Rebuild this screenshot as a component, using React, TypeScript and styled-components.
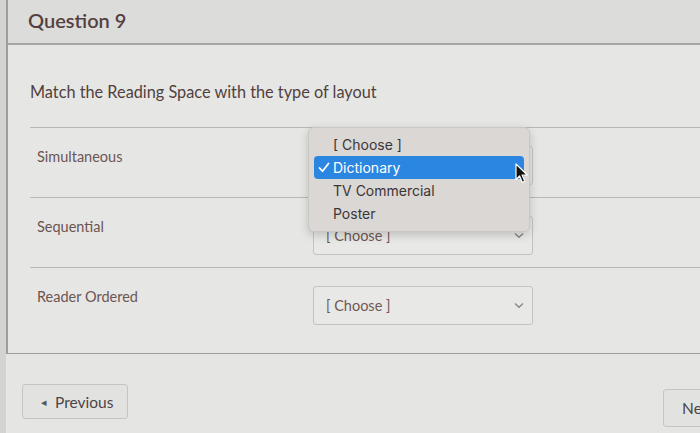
import styled, { createGlobalStyle } from 'styled-components';

const GlobalStyle = createGlobalStyle`
  html, body {
    margin: 0;
    padding: 0;
    background: #e5e6e4;
    font-family: Lato, 'Open Sans', sans-serif;
  }
`;

const options = ['[ Choose ]', 'Dictionary', 'TV Commercial', 'Poster'];

const rows = [
  { label: 'Simultaneous', open: true },
  { label: 'Sequential', open: false },
  { label: 'Reader Ordered', open: false },
];

const Chevron = () => (
  <svg width='10' height='7' viewBox='0 0 10 7'>
    <path d='M1 1.5 L5 5.2 L9 1.5' fill='none' stroke='#8a8585' strokeWidth='1.4' />
  </svg>
);

const CheckMark = () => (
  <svg width='12' height='11' viewBox='0 0 12 11'>
    <path d='M1.5 6 L4.5 9.2 L10.5 1.5' fill='none' stroke='#fff' strokeWidth='1.8' strokeLinecap='round' strokeLinejoin='round' />
  </svg>
);

const Cursor = () => (
  <svg width='14' height='21' viewBox='0 0 14 21'>
    <path
      d='M1 1 L1 16.5 L4.6 13 L7.3 19.4 L9.8 18.3 L7.1 12 L12.3 12 Z'
      fill='#111'
      stroke='#fff'
      strokeWidth='1.2'
      strokeLinejoin='round'
    />
  </svg>
);

const App = () => {
  return (
    <>
      <GlobalStyle />
      <Frame>
        <LeftEdge />
        <Main>
          <QuestionBox>
            <Header>
              <h2>Question 9</h2>
            </Header>
            <Body>
              <Prompt>Match the Reading Space with the type of layout</Prompt>
              <RowList>
                {rows.map((row) => (
                  <Row key={row.label}>
                    <Label>{row.label}</Label>
                    <SelectBox>
                      <span>[ Choose ]</span>
                      <Chevron />
                      {row.open && (
                        <Popup>
                          {options.map((option) => (
                            <Option key={option} selected={option === 'Dictionary'}>
                              <CheckSlot>{option === 'Dictionary' && <CheckMark />}</CheckSlot>
                              <span>{option}</span>
                            </Option>
                          ))}
                          <CursorSpot>
                            <Cursor />
                          </CursorSpot>
                        </Popup>
                      )}
                    </SelectBox>
                  </Row>
                ))}
              </RowList>
            </Body>
          </QuestionBox>
          <Footer>
            <NavButton>
              <Arrow>◂</Arrow>Previous
            </NavButton>
            <NavButton next>
              Next<Arrow>▸</Arrow>
            </NavButton>
          </Footer>
        </Main>
      </Frame>
    </>
  );
};

const Frame = styled.div`
  display: flex;
  height: 433px;
  overflow: hidden;
`;

const LeftEdge = styled.div`
  width: 6px;
  flex-shrink: 0;
  background: #d3d4d2;
`;

const Main = styled.div`
  flex: 1;
  display: flex;
  flex-direction: column;
  min-width: 0;
`;

const QuestionBox = styled.section`
  border-left: 2px solid #9d9e9c;
  border-bottom: 1px solid #9d9e9c;
  height: 354px;
  box-sizing: border-box;
  background: #e6e7e4;
`;

const Header = styled.div`
  height: 45px;
  box-sizing: border-box;
  padding: 8px 0 0 20px;
  background: #dcdddb;
  border-bottom: 2px solid #a6a7a5;

  h2 {
    margin: 0;
    font-size: 20px;
    font-weight: 600;
    line-height: 24px;
    color: #54403f;
  }
`;

const Body = styled.div`
  padding: 37px 0 0 22px;
`;

const Prompt = styled.p`
  margin: 0;
  font-size: 16.3px;
  line-height: 20px;
  color: #523f40;
`;

const RowList = styled.ul`
  list-style: none;
  margin: 25px 0 0 0;
  padding: 0;
`;

const Row = styled.li`
  display: flex;
  align-items: flex-start;
  padding: 18px 0 12px 0;
  border-top: 1px solid #b8b9b7;
`;

const Label = styled.div`
  width: 276px;
  padding: 1px 0 0 7px;
  font-size: 14.5px;
  line-height: 20px;
  color: #6c5553;
`;

const SelectBox = styled.div`
  position: relative;
  width: 220px;
  height: 39px;
  box-sizing: border-box;
  display: flex;
  align-items: center;
  justify-content: space-between;
  padding: 0 8px 0 12px;
  border: 1px solid #c3c4c2;
  border-radius: 3px;
  background: #e8e9e6;
  font-size: 14.5px;
  color: #6f5755;
`;

const Popup = styled.div`
  position: absolute;
  left: -6px;
  top: -20px;
  width: 222px;
  box-sizing: border-box;
  padding: 5px 5px 6px;
  background: #dad7d5;
  border: 1px solid #c9c6c4;
  border-radius: 6px;
  box-shadow: 0 3px 10px rgba(0, 0, 0, 0.18);
  font-family: Inter, 'Liberation Sans', sans-serif;
  z-index: 2;
`;

const Option = styled.div<{ selected?: boolean }>`
  height: 23px;
  display: flex;
  align-items: center;
  padding-left: 4px;
  border-radius: 4px;
  font-size: 14px;
  color: ${(p) => (p.selected ? '#ffffff' : '#3a3536')};
  background: ${(p) => (p.selected ? '#2b86e2' : 'transparent')};
`;

const CheckSlot = styled.span`
  width: 15px;
  display: flex;
  align-items: center;
`;

const CursorSpot = styled.div`
  position: absolute;
  right: 0;
  top: 35px;
`;

const Footer = styled.div`
  display: flex;
  justify-content: space-between;
  align-items: flex-start;
  padding: 30px 0 0 16px;
`;

const NavButton = styled.button<{ next?: boolean }>`
  display: flex;
  align-items: center;
  gap: 8px;
  height: ${(p) => (p.next ? '38px' : '35px')};
  margin-top: ${(p) => (p.next ? '5px' : '0')};
  margin-right: ${(p) => (p.next ? '-44px' : '0')};
  padding: 0 14px 0 18px;
  border: 1px solid #c5c6c4;
  border-radius: 3px;
  background: #e2e3e1;
  font-family: Lato, 'Open Sans', sans-serif;
  font-size: 15.5px;
  color: #4a4546;
`;

const Arrow = styled.span`
  font-size: 11px;
  color: #555;
`;

export default App;
